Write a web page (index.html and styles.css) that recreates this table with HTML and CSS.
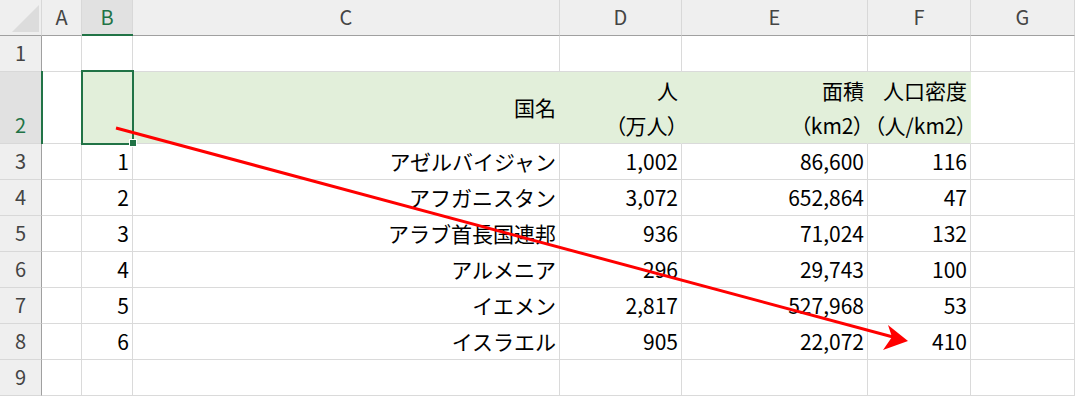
FILE: index.html
```html
<!DOCTYPE html>
<html lang="ja">
<head>
<meta charset="utf-8">
<title>Sheet</title>
<link rel="stylesheet" href="styles.css">
</head>
<body>
<div class="sheet">
  <div class="grid">
    <div class="hd corner"><svg class="tri" width="42" height="35" viewBox="0 0 42 35"><polygon points="12,32 39,32 39,5" fill="#dcdcdc"/></svg></div>
    <div class="hd">A</div>
    <div class="hd hd-sel">B</div>
    <div class="hd">C</div>
    <div class="hd">D</div>
    <div class="hd">E</div>
    <div class="hd">F</div>
    <div class="hd">G</div>

    <div class="rh">1</div>
    <div class="c"></div><div class="c"></div><div class="c"></div><div class="c"></div><div class="c"></div><div class="c"></div><div class="c"></div>

    <div class="rh rh-sel">2</div>
    <div class="c"></div>
    <div class="c fill"></div>
    <div class="c fill mid"><span>国名</span></div>
    <div class="c fill mid"><span>人<br>（万人）</span></div>
    <div class="c fill mid"><span>面積<br>（km2）</span></div>
    <div class="c fill mid"><span>人口密度<br>（人/km2）</span></div>
    <div class="c"></div>

    <div class="rh">3</div>
    <div class="c"></div><div class="c r">1</div><div class="c r">アゼルバイジャン</div><div class="c r">1,002</div><div class="c r">86,600</div><div class="c r">116</div><div class="c"></div>

    <div class="rh">4</div>
    <div class="c"></div><div class="c r">2</div><div class="c r">アフガニスタン</div><div class="c r">3,072</div><div class="c r">652,864</div><div class="c r">47</div><div class="c"></div>

    <div class="rh">5</div>
    <div class="c"></div><div class="c r">3</div><div class="c r">アラブ首長国連邦</div><div class="c r">936</div><div class="c r">71,024</div><div class="c r">132</div><div class="c"></div>

    <div class="rh">6</div>
    <div class="c"></div><div class="c r">4</div><div class="c r">アルメニア</div><div class="c r">296</div><div class="c r">29,743</div><div class="c r">100</div><div class="c"></div>

    <div class="rh">7</div>
    <div class="c"></div><div class="c r">5</div><div class="c r">イエメン</div><div class="c r">2,817</div><div class="c r">527,968</div><div class="c r">53</div><div class="c"></div>

    <div class="rh">8</div>
    <div class="c"></div><div class="c r">6</div><div class="c r">イスラエル</div><div class="c r">905</div><div class="c r">22,072</div><div class="c r">410</div><div class="c"></div>

    <div class="rh">9</div>
    <div class="c"></div><div class="c"></div><div class="c"></div><div class="c"></div><div class="c"></div><div class="c"></div><div class="c"></div>
  </div>

  <div class="selection"></div>
  <div class="handle"></div>
  <div class="col-mark"></div>
  <div class="row-mark"></div>

  <svg class="arrow" width="1076" height="396" viewBox="0 0 1076 396">
    <line x1="116" y1="128" x2="893" y2="337" stroke="#ff0000" stroke-width="3"/>
    <polygon points="908,341 888,325 892,337 883,350" fill="#ff0000"/>
  </svg>
</div>
</body>
</html>
```

FILE: styles.css
```css
html, body {
  margin: 0;
  padding: 0;
  background: #ffffff;
}

.sheet {
  position: relative;
  width: 1076px;
  height: 396px;
  overflow: hidden;
  font-family: "Noto Sans CJK JP", "Noto Sans", sans-serif;
}

.grid {
  display: grid;
  grid-template-columns: 42px 40px 51px 427px 122px 186px 103px 104px;
  grid-template-rows: 36px 36px 72px 36px 36px 36px 36px 36px 36px 36px;
}

.hd {
  box-sizing: border-box;
  background: #efefef;
  border-right: 1px solid #d8d8d8;
  border-bottom: 1px solid #a0a0a0;
  color: #444444;
  font-size: 20px;
  line-height: 30px;
  display: flex;
  justify-content: center;
  align-items: center;
  padding-bottom: 2px;
}

.corner {
  position: relative;
  border-right: 1px solid #d8d8d8;
}

.tri {
  position: absolute;
  left: 0;
  top: 0;
}

.hd-sel {
  background: #e1e1e1;
  color: #217346;
}

.rh {
  box-sizing: border-box;
  background: #efefef;
  border-right: 1px solid #a0a0a0;
  border-bottom: 1px solid #d8d8d8;
  color: #444444;
  font-size: 20px;
  line-height: 30px;
  display: flex;
  justify-content: center;
  align-items: flex-end;
  padding-bottom: 3px;
}

.rh-sel {
  background: #e1e1e1;
  color: #217346;
}

.c {
  box-sizing: border-box;
  border-right: 1px solid #dadada;
  border-bottom: 1px solid #dadada;
  color: #000000;
  font-size: 21px;
  line-height: 30px;
  display: flex;
  align-items: flex-end;
  padding: 0 3px 3px 3px;
  white-space: nowrap;
}

.r {
  justify-content: flex-end;
}

.fill {
  background: #e2efda;
  border-right-color: #e2efda;
}

.mid {
  align-items: center;
  justify-content: flex-end;
  text-align: right;
  line-height: 35px;
  padding-bottom: 0;
  font-feature-settings: "palt";
}

.selection {
  position: absolute;
  left: 81px;
  top: 70px;
  width: 53px;
  height: 75px;
  box-sizing: border-box;
  border: 2px solid #217346;
}

.handle {
  position: absolute;
  left: 129px;
  top: 139px;
  width: 8px;
  height: 8px;
  box-sizing: border-box;
  background: #217346;
  border: 1px solid #ffffff;
}

.col-mark {
  position: absolute;
  left: 82px;
  top: 34px;
  width: 51px;
  height: 2px;
  background: #217346;
}

.row-mark {
  position: absolute;
  left: 41px;
  top: 71px;
  width: 2px;
  height: 73px;
  background: #217346;
}

.arrow {
  position: absolute;
  left: 0;
  top: 0;
  pointer-events: none;
}
```
